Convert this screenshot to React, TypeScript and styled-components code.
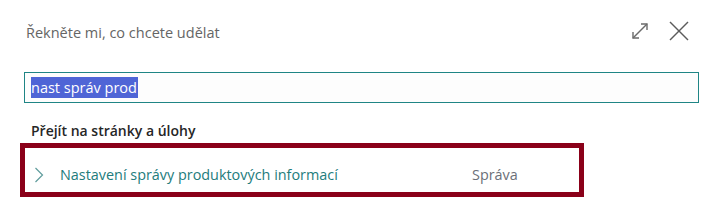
import React from 'react';
import styled, { createGlobalStyle } from 'styled-components';

const GlobalStyle = createGlobalStyle`
  body {
    margin: 0;
    background: #fff;
    font-family: "Open Sans", "Noto Sans", sans-serif;
  }
`;

export default function App() {
  return (
    <Panel>
      <GlobalStyle />
      <Header>
        <Title>Řekněte mi, co chcete udělat</Title>
        <Actions>
          <IconButton aria-label="Rozbalit">
            <svg width="18" height="18" viewBox="0 0 18 18" fill="none" stroke="#6b6b6b" strokeWidth="1.4">
              <line x1="2" y1="16" x2="16" y2="2" />
              <polyline points="10,2 16,2 16,8" />
              <polyline points="2,10 2,16 8,16" />
            </svg>
          </IconButton>
          <IconButton aria-label="Zavřít">
            <svg width="20" height="20" viewBox="0 0 20 20" fill="none" stroke="#5c5c5c" strokeWidth="1.5">
              <line x1="1" y1="1" x2="19" y2="19" />
              <line x1="19" y1="1" x2="1" y2="19" />
            </svg>
          </IconButton>
        </Actions>
      </Header>

      <SearchBox>
        <Selected>nast správ prod</Selected>
      </SearchBox>

      <SectionTitle>Přejít na stránky a úlohy</SectionTitle>

      <Result>
        <Chevron width="10" height="16" viewBox="0 0 10 16" fill="none" stroke="#5f9c9c" strokeWidth="1.2">
          <polyline points="1.5,1 8.5,8 1.5,15" />
        </Chevron>
        <ResultName>Nastavení správy produktových informací</ResultName>
        <ResultCategory>Správa</ResultCategory>
      </Result>
    </Panel>
  );
}

const Panel = styled.div`
  width: 724px;
  height: 211px;
  box-sizing: border-box;
  padding-top: 20px;
`;

const Header = styled.div`
  display: flex;
  align-items: center;
  justify-content: space-between;
  height: 22px;
  padding-left: 26px;
  padding-right: 35px;
`;

const Title = styled.div`
  font-size: 14.5px;
  color: #656565;
  padding-top: 2px;
`;

const Actions = styled.div`
  display: flex;
  align-items: center;
  gap: 20px;
`;

const IconButton = styled.div`
  display: flex;
  align-items: center;
  justify-content: center;
`;

const SearchBox = styled.div`
  margin: 30px 0 0 24px;
  width: 675px;
  height: 31px;
  box-sizing: border-box;
  border: 1.5px solid #1f8585;
  background: #fdfdfd;
  display: flex;
  align-items: center;
  padding-left: 6px;
`;

const Selected = styled.span`
  background: #4f65d6;
  color: #fff;
  font-size: 14.5px;
  line-height: 21px;
  padding-right: 1px;
`;

const SectionTitle = styled.div`
  margin: 18px 0 0 31px;
  font-size: 14px;
  font-weight: 600;
  color: #262626;
  line-height: 20px;
`;

const Result = styled.div`
  margin: 2px 0 0 20px;
  width: 564px;
  height: 54px;
  box-sizing: border-box;
  border: 5px solid #8a0019;
  display: flex;
  align-items: center;
  padding: 9px 0 0 9px;
`;

const Chevron = styled.svg`
  flex: none;
`;

const ResultName = styled.div`
  margin-left: 16px;
  font-size: 14.4px;
  color: #237c7c;
  width: 412px;
`;

const ResultCategory = styled.div`
  font-size: 14.4px;
  color: #6b6f78;
`;
